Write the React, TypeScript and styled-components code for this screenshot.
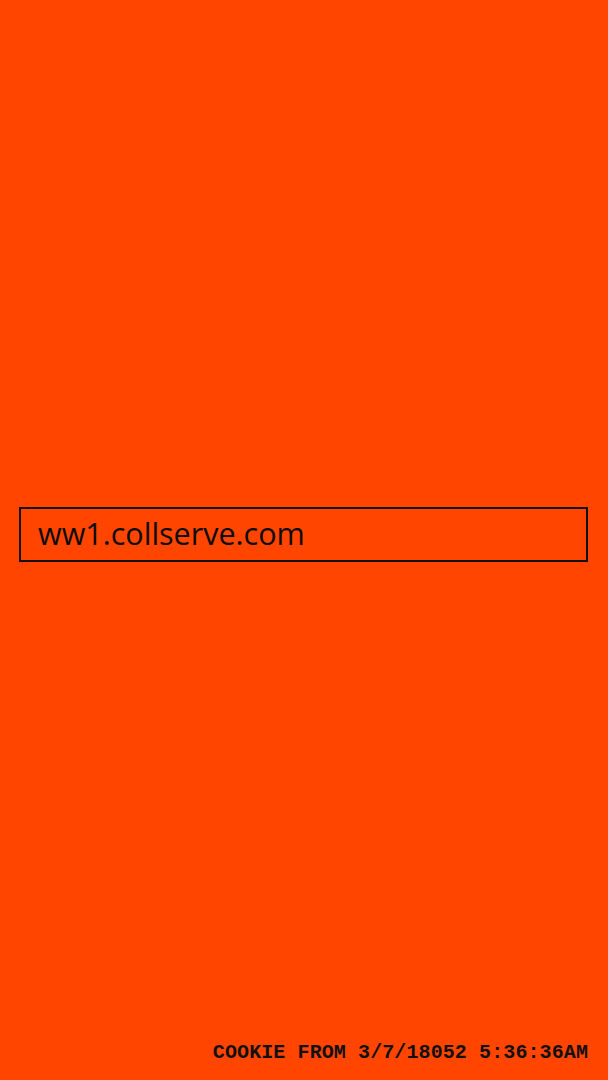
import React from "react";
import styled, { createGlobalStyle } from "styled-components";

const Global = createGlobalStyle`
  html, body { margin: 0; padding: 0; background: #ff4500; }
  #root { min-height: 100vh; }
`;

const Page = styled.div`
  min-height: 100vh;
  display: flex;
  flex-direction: column;
  background: #ff4500;
  color: #111;
`;

const Main = styled.main`
  flex: 1;
  display: flex;
  align-items: center;
  padding: 29px 20px 0 19px;
`;

const UrlBox = styled.div`
  flex: 1;
  height: 55px;
  box-sizing: border-box;
  border: 2px solid #111;
  display: flex;
  align-items: center;
  padding: 0 17px 4px;
  font-family: "Open Sans", "Noto Sans", sans-serif;
  font-size: 30.5px;
  color: #0d0d0d;
`;

const Footer = styled.footer`
  text-align: right;
  padding: 0 20px 14px;
  font-family: "Liberation Mono", monospace;
  font-weight: 700;
  font-size: 20px;
  line-height: 26px;
  letter-spacing: 0.1px;
  color: #111;
`;

export default function App() {
  return (
    <>
      <Global />
      <Page>
        <Main>
          <UrlBox>ww1.collserve.com</UrlBox>
        </Main>
        <Footer>COOKIE FROM 3/7/18052 5:36:36AM</Footer>
      </Page>
    </>
  );
}
